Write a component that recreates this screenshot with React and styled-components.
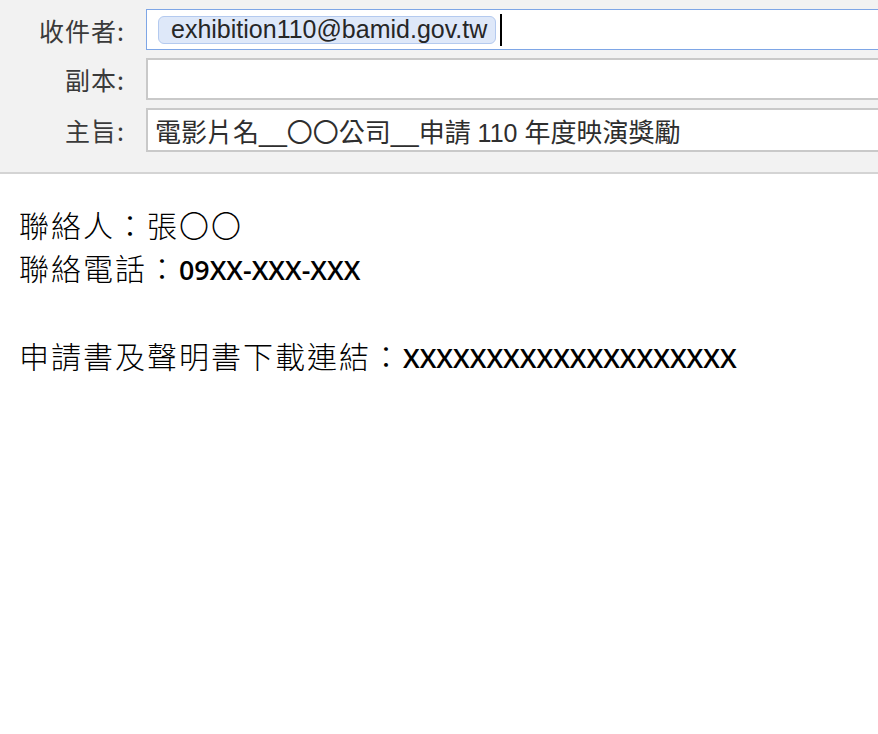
import React from 'react';
import styled, { createGlobalStyle } from 'styled-components';

const GlobalStyle = createGlobalStyle`
  html, body {
    margin: 0;
    padding: 0;
    background: #ffffff;
  }
  body {
    width: 878px;
    height: 734px;
    overflow: hidden;
  }
`;

const Page = styled.div`
  width: 878px;
  height: 734px;
  overflow: hidden;
  background: #ffffff;
`;

const Header = styled.div`
  display: grid;
  grid-template-columns: 125px 1fr;
  column-gap: 21px;
  row-gap: 8px;
  align-items: center;
  padding: 9px 0 20px 0;
  background: #f2f2f2;
  border-bottom: 2px solid #d4d4d4;
  font-family: "Liberation Sans", "Noto Sans CJK TC", sans-serif;
  font-size: 25px;
  color: #333333;
`;

const Label = styled.div`
  text-align: right;
  font-family: "Noto Sans CJK TC", sans-serif;
  font-size: 25px;
  color: #3a3a3a;
  letter-spacing: 1px;
`;

const Field = styled.div`
  display: flex;
  align-items: center;
  box-sizing: border-box;
  height: ${(p) => p.h}px;
  margin-right: -4px;
  padding-left: ${(p) => (p.focused ? 11 : 7)}px;
  background: #ffffff;
  border: ${(p) => (p.focused ? '1px solid #7ea6e6' : '2px solid #c9c9c9')};
`;

const Chip = styled.span`
  display: inline-flex;
  align-items: center;
  box-sizing: border-box;
  height: 28px;
  padding: 0 8px 0 12px;
  background: #dee8f9;
  border: 1px solid #b4caef;
  border-radius: 6px;
  color: #262626;
  font-size: 25px;
`;

const Caret = styled.span`
  display: inline-block;
  width: 2px;
  height: 32px;
  margin-left: 4px;
  background: #000000;
`;

const Subject = styled.span`
  white-space: nowrap;
  color: #2e2e2e;
  font-size: 25px;
`;

const Cjk = styled.span`
  font-family: "Noto Sans CJK TC", sans-serif;
  font-size: 26px;
`;

const Body = styled.div`
  padding: 29px 0 0 19px;
  font-family: "Noto Sans CJK TC", sans-serif;
  font-size: 30px;
  line-height: 43px;
  letter-spacing: 2px;
  color: #000000;
  font-weight: 300;
`;

const Line = styled.div`
  white-space: nowrap;
  min-height: 43px;
`;

const Latin = styled.span`
  font-family: "Open Sans", sans-serif;
  font-weight: 600;
  font-size: 26.8px;
  letter-spacing: 0;
`;

export default function App() {
  return (
    <Page>
      <GlobalStyle />
      <Header>
        <Label>收件者:</Label>
        <Field focused h={41}>
          <Chip>exhibition110@bamid.gov.tw</Chip>
          <Caret />
        </Field>
        <Label>副本:</Label>
        <Field h={42} />
        <Label>主旨:</Label>
        <Field h={44}>
          <Subject>
            <Cjk>電影片名</Cjk>__<Cjk>〇〇公司</Cjk>__<Cjk>申請</Cjk> 110 <Cjk>年度映演獎勵</Cjk>
          </Subject>
        </Field>
      </Header>
      <Body>
        <Line>聯絡人：張〇〇</Line>
        <Line>
          聯絡電話：<Latin>09XX-XXX-XXX</Latin>
        </Line>
        <Line />
        <Line>
          申請書及聲明書下載連結：<Latin>XXXXXXXXXXXXXXXXXXXX</Latin>
        </Line>
      </Body>
    </Page>
  );
}
